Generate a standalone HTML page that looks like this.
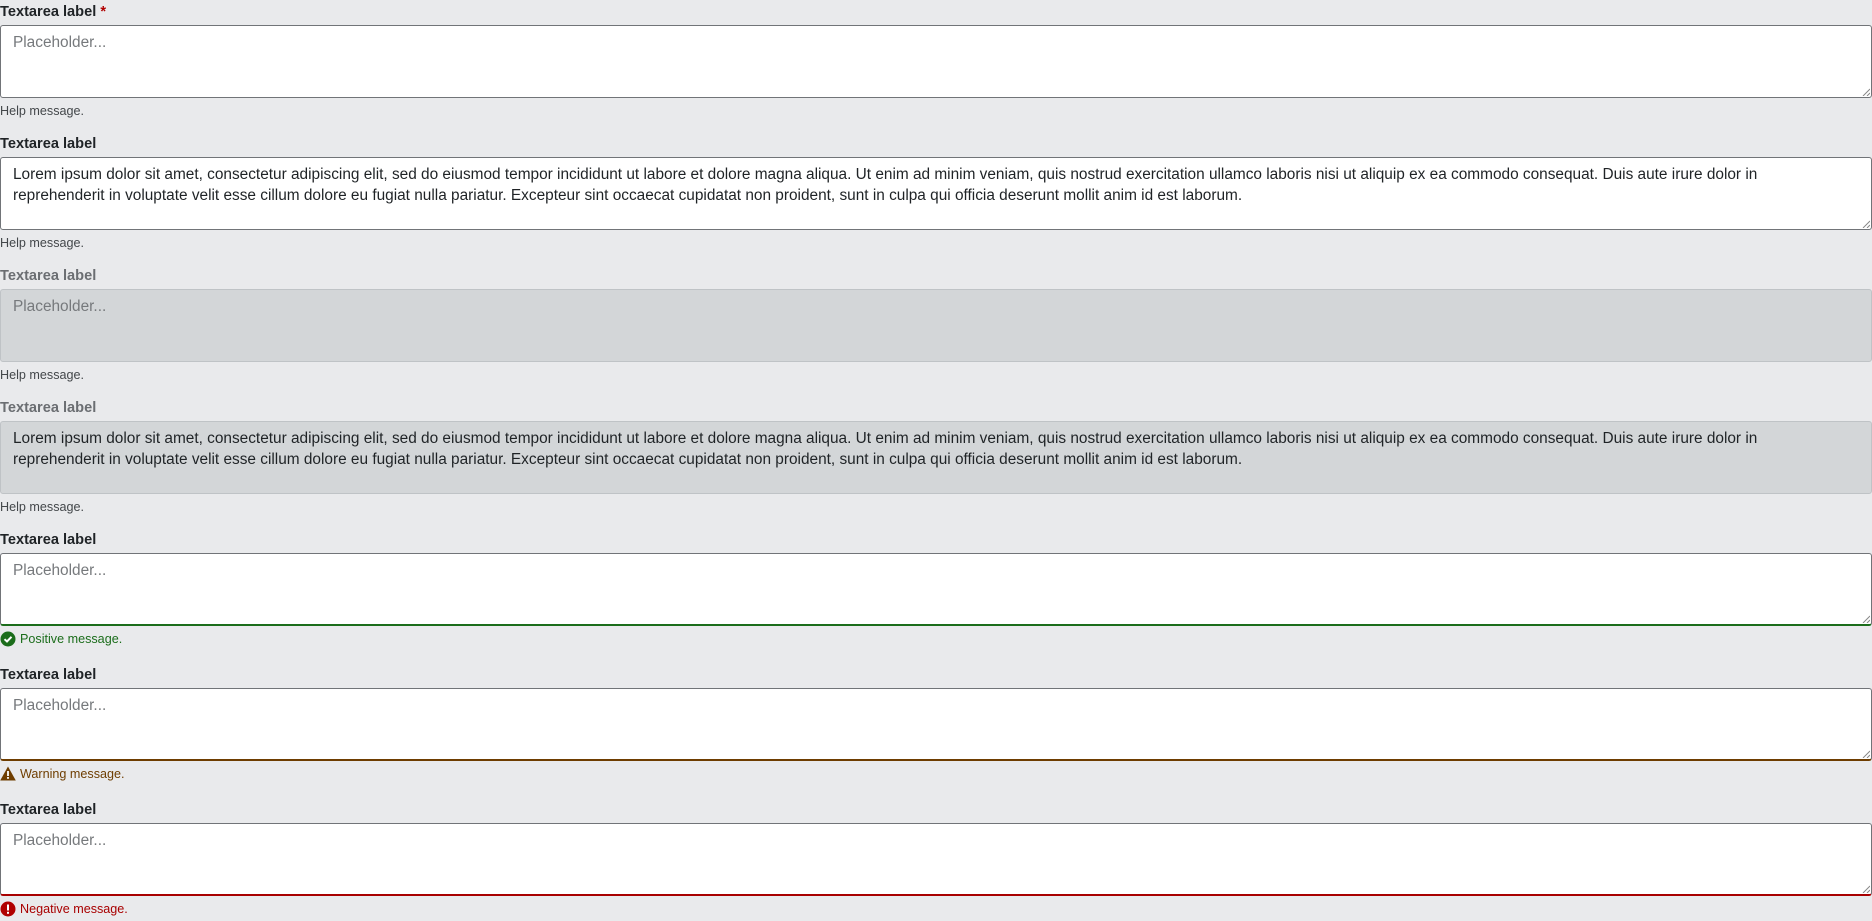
<!DOCTYPE html>
<html><head><meta charset="utf-8"><style>
html,body{margin:0;padding:0;background:#e9eaec;width:1872px;height:921px;overflow:hidden;font-family:"Liberation Sans","DejaVu Sans",sans-serif;}
.f{position:absolute;left:0;width:1872px;}
.l{position:absolute;left:0;top:2px;font-size:14.6px;font-weight:bold;color:#1f2326;line-height:20px;}
.l.d{color:#6b6e72}
.l .r{color:#b00000}
.t{position:absolute;left:0;top:25px;width:1870px;height:71px;border:1px solid #717478;border-radius:3px;background:#fff;box-sizing:content-box;}
.t.d{background:#d3d6d8;border-color:#bfc3c6}
.t .x{position:absolute;left:12px;top:6px;font-size:15.4px;line-height:21px;color:#1f2326;white-space:nowrap}
.t .p{color:#76797c}
.t svg{position:absolute;right:1px;bottom:1px}
.t.ok{border-bottom:2px solid #1b6d1b;height:70px}
.t.wa{border-bottom:2px solid #6e3d00;height:70px}
.t.ng{border-bottom:2px solid #a80000;height:70px}
.m{position:absolute;left:0;top:102px;font-size:12.6px;line-height:18px;color:#43474a}
.m svg{position:absolute;left:0;top:1px}
.m span{margin-left:20px}
</style></head><body>

<div class="f" style="top:0"><div class="l">Textarea label <span class="r">*</span></div>
<div class="t"><div class="x p">Placeholder...</div><svg width="9" height="9"><path d="M2 9L9 2M6 9L9 6" stroke="#888" stroke-width="1"/></svg></div>
<div class="m">Help message.</div></div>

<div class="f" style="top:132px"><div class="l">Textarea label</div>
<div class="t"><div class="x">Lorem ipsum dolor sit amet, consectetur adipiscing elit, sed do eiusmod tempor incididunt ut labore et dolore magna aliqua. Ut enim ad minim veniam, quis nostrud exercitation ullamco laboris nisi ut aliquip ex ea commodo consequat. Duis aute irure dolor in<br>reprehenderit in voluptate velit esse cillum dolore eu fugiat nulla pariatur. Excepteur sint occaecat cupidatat non proident, sunt in culpa qui officia deserunt mollit anim id est laborum.</div><svg width="9" height="9"><path d="M2 9L9 2M6 9L9 6" stroke="#888" stroke-width="1"/></svg></div>
<div class="m">Help message.</div></div>

<div class="f" style="top:264px"><div class="l d">Textarea label</div>
<div class="t d"><div class="x p">Placeholder...</div></div>
<div class="m">Help message.</div></div>

<div class="f" style="top:396px"><div class="l d">Textarea label</div>
<div class="t d"><div class="x">Lorem ipsum dolor sit amet, consectetur adipiscing elit, sed do eiusmod tempor incididunt ut labore et dolore magna aliqua. Ut enim ad minim veniam, quis nostrud exercitation ullamco laboris nisi ut aliquip ex ea commodo consequat. Duis aute irure dolor in<br>reprehenderit in voluptate velit esse cillum dolore eu fugiat nulla pariatur. Excepteur sint occaecat cupidatat non proident, sunt in culpa qui officia deserunt mollit anim id est laborum.</div></div>
<div class="m">Help message.</div></div>

<div class="f" style="top:528px"><div class="l">Textarea label</div>
<div class="t ok"><div class="x p">Placeholder...</div><svg width="9" height="9"><path d="M2 9L9 2M6 9L9 6" stroke="#888" stroke-width="1"/></svg></div>
<div class="m" style="color:#1b6d1b"><svg width="16" height="16" viewBox="0 0 16 16"><circle cx="8" cy="8" r="7.5" fill="#1b6d1b"/><path d="M4.5 8.2L7 10.5L11.5 5.8" stroke="#fff" stroke-width="2" fill="none"/></svg><span>Positive message.</span></div></div>

<div class="f" style="top:663px"><div class="l">Textarea label</div>
<div class="t wa"><div class="x p">Placeholder...</div><svg width="9" height="9"><path d="M2 9L9 2M6 9L9 6" stroke="#888" stroke-width="1"/></svg></div>
<div class="m" style="color:#6e3d00"><svg width="16" height="15" viewBox="0 0 16 15"><path d="M8 0.5L15.8 14.5H0.2Z" fill="#6e3d00"/><rect x="7.1" y="5" width="1.8" height="5" fill="#fff"/><rect x="7.1" y="11" width="1.8" height="1.8" fill="#fff"/></svg><span>Warning message.</span></div></div>

<div class="f" style="top:798px"><div class="l">Textarea label</div>
<div class="t ng"><div class="x p">Placeholder...</div><svg width="9" height="9"><path d="M2 9L9 2M6 9L9 6" stroke="#888" stroke-width="1"/></svg></div>
<div class="m" style="color:#a80000"><svg width="16" height="16" viewBox="0 0 16 16"><circle cx="8" cy="8" r="7.5" fill="#b00000"/><rect x="7" y="3.5" width="2" height="6" fill="#fff"/><rect x="7" y="10.8" width="2" height="2" fill="#fff"/></svg><span>Negative message.</span></div></div>

</body></html>
